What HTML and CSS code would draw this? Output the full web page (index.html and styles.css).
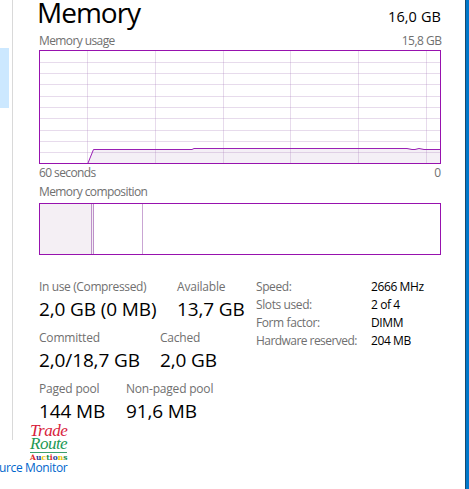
FILE: index.html
```
<!DOCTYPE html>
<html lang="en">
<head>
<meta charset="utf-8">
<title>Memory</title>
<link rel="stylesheet" href="styles.css">
</head>
<body>
<div class="window">
  <aside class="sidebar"><div class="selected"></div></aside>
  <div class="divider"></div>
  <main class="panel">
    <header class="heading"><h1>Memory</h1><span class="total">16,0 GB</span></header>
    <div class="caption usage-caption"><span class="tight">Memory usage</span><span class="snug">15,8 GB</span></div>
    <svg class="chart" width="402" height="114" viewBox="0 0 402 114">
      <path class="area" d="M49 113L54 99H153L155 98H368L373 99H376L380 98L386 99H401V113Z"/>
      <path class="grid" d="M1 12.5H401M1 23.5H401M1 34.5H401M1 46.5H401M1 57.5H401M1 68.5H401M1 80.5H401M1 91.5H401M1 102.5H401"/>
      <path class="grid" d="M48.5 1V113M116.5 1V113M184.5 1V113M251.5 1V113M319.5 1V113M387.5 1V113"/>
      <path class="line" d="M49 113L54.5 99.5H153L155 98.5H368L373 99.5H376L380 98.5L385 99.5H401"/>
      <rect class="frame" x=".5" y=".5" width="401" height="113"/>
    </svg>
    <div class="caption"><span class="tight">60 seconds</span><span>0</span></div>
    <div class="caption composition-caption"><span class="tight">Memory composition</span></div>
    <div class="composition"><i class="in-use"></i><i class="modified"></i><i class="standby"></i></div>
    <div class="details">
      <div class="stats">
        <div class="row">
          <div class="stat in-use-stat"><span class="snug">In use (Compressed)</span><b>2,0 GB (0 MB)</b></div>
          <div class="stat"><span>Available</span><b>13,7 GB</b></div>
        </div>
        <div class="row">
          <div class="stat committed-stat"><span>Committed</span><b>2,0/18,7 GB</b></div>
          <div class="stat"><span>Cached</span><b>2,0 GB</b></div>
        </div>
        <div class="row">
          <div class="stat paged-stat"><span>Paged pool</span><b>144 MB</b></div>
          <div class="stat"><span>Non-paged pool</span><b>91,6 MB</b></div>
        </div>
      </div>
      <dl class="specs">
        <dt>Speed:</dt><dd>2666 MHz</dd>
        <dt>Slots used:</dt><dd>2 of 4</dd>
        <dt>Form factor:</dt><dd>DIMM</dd>
        <dt class="tight">Hardware reserved:</dt><dd>204 MB</dd>
      </dl>
    </div>
  </main>
  <div class="desktop"></div>
  <a class="monitor">urce Monitor</a>
  <div class="logo">
    <span class="trade">Trade</span>
    <span class="route">Route</span>
    <span class="auctions"><i class="red">A</i><i class="blue">u</i><i class="yellow">c</i><i class="green">t</i><i class="red">i</i><i class="blue">o</i><i class="yellow">n</i><i class="green">s</i></span>
  </div>
</div>
</body>
</html>
```
FILE: styles.css
```
* { box-sizing: border-box; }
body {
  margin: 0;
  background: #fff;
  font-family: "Open Sans", "Noto Sans", sans-serif;
  font-size: 12px;
  line-height: 16px;
  color: #707070;
  overflow: hidden;
}
.window { position: relative; display: flex; width: 469px; height: 489px; overflow: hidden; white-space: nowrap; }
.sidebar { width: 12px; padding-top: 48px; }
.selected { width: 9px; height: 60px; background: #cce8ff; }
.divider { width: 1px; height: 440px; background: #d9d9d9; }
.panel { width: 402px; margin-left: 26px; }
.desktop { width: 4px; margin-left: auto; background: #0078cb; border-left: 1px solid #174a70; }

.heading { display: flex; justify-content: space-between; height: 22px; color: #000; }
h1 { margin: 0 0 0 -2px; font-size: 28px; font-weight: 400; line-height: 24px; letter-spacing: -1px; }
.total { font-size: 14.5px; line-height: 33px; letter-spacing: .1px; }
.caption { display: flex; justify-content: space-between; height: 16px; line-height: 18px; letter-spacing: -.2px; }
.usage-caption { margin-top: 10px; }
.composition-caption { margin-top: 3px; }
.caption .tight { letter-spacing: -.6px; }
.specs .tight { letter-spacing: -.55px; }

.chart { display: block; margin-top: 2px; }
.area { fill: #f4eff6; }
.grid { fill: none; stroke: #a97dba; stroke-opacity: .28; }
.line { fill: none; stroke: #9a20b5; }
.frame { fill: none; stroke: #9712ae; }

.composition { display: flex; height: 52px; margin-top: 4px; border: 1px solid #9712ae; }
.in-use { width: 52px; background: #f4eff4; border-right: 1px solid #bd91c9; }
.modified { width: 2px; background: #f4eff4; border-right: 1px solid #bd91c9; }
.standby { width: 49px; border-right: 1px solid #c9a5d3; }

.details { display: flex; margin-top: 24px; }
.stats { width: 217px; }
.row { display: flex; height: 51px; }
.stat { display: flex; flex-direction: column; gap: 2px; letter-spacing: -.2px; }
.snug { letter-spacing: -.37px; }
.caption .snug { letter-spacing: -.5px; margin-right: -.5px; }
.stat b { font-size: 19px; line-height: 26px; margin-top: -1px; font-weight: 400; color: #000; letter-spacing: -.12px; }
.in-use-stat { width: 138px; }
.committed-stat { width: 121px; }
.paged-stat { width: 87px; }

.specs { display: grid; grid-template-columns: 115px auto; grid-auto-rows: 18px; align-content: start; margin: 0; letter-spacing: -.4px; }
.specs dd { margin: 0; color: #000; }

.monitor { position: absolute; left: -1px; top: 461px; height: 14px; line-height: 14px; color: #0066cc; letter-spacing: -.36px; }
.logo { position: absolute; left: 30px; top: 424px; width: 38px; font-family: "Liberation Serif", serif; }
.logo span { display: block; height: 13px; line-height: 13px; font-size: 17px; font-style: italic; letter-spacing: -.5px; }
.logo .trade { color: #d8223c; }
.logo .route { height: 16px; width: 37px; color: #209853; border-bottom: 1px solid #3c9e6d; }
.logo .auctions { height: 9px; line-height: 9px; font-family: "DejaVu Serif", serif; font-size: 7.5px; font-weight: 700; font-style: normal; letter-spacing: .1px; }
.auctions i { font-style: normal; }
.red { color: #d22; }
.blue { color: #253e9b; }
.yellow { color: #ecc500; }
.green { color: #178f48; }
```
